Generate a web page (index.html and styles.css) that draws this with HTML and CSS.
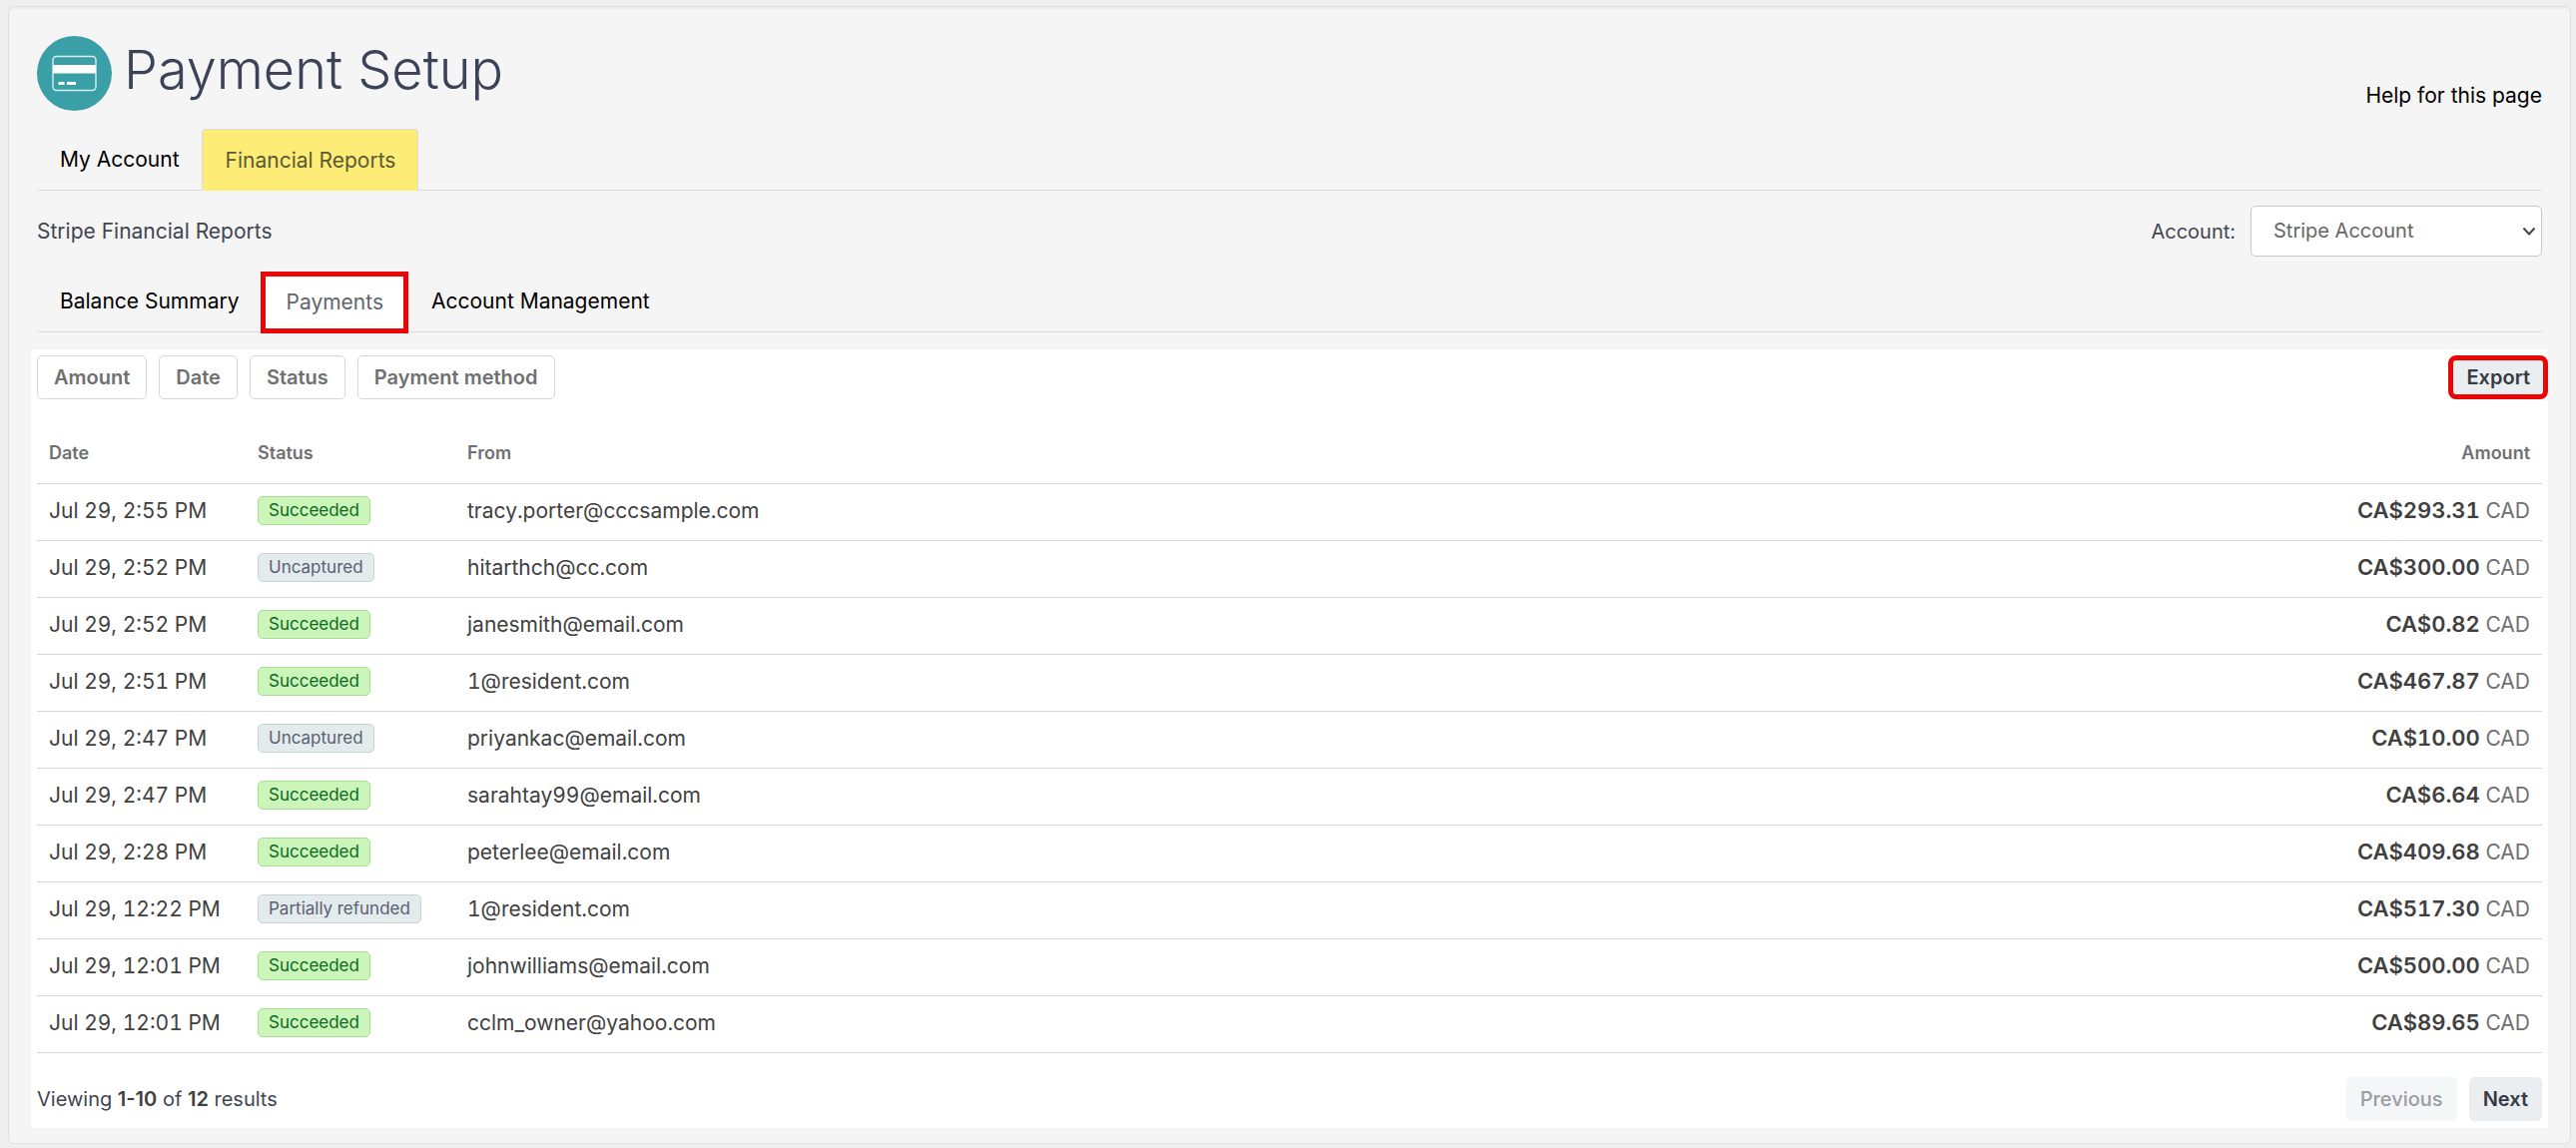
FILE: index.html
```html
<!DOCTYPE html>
<html lang="en">
<head>
    <meta charset="UTF-8">
    <meta name="viewport" content="width=device-width, initial-scale=1.0">
    <title>Payment Setup</title>
    <link rel="stylesheet" href="styles.css">
</head>
<body>
    <main class="panel">
        <header class="page-header">
            <div class="title">
                <svg class="title-icon" viewBox="0 0 75 75" aria-hidden="true">
                    <circle cx="37.5" cy="37.5" r="37.5" fill="#3a9fa6"/>
                    <rect x="16" y="20.5" width="43" height="34" rx="3.5" fill="none" stroke="#d5f0f0" stroke-width="1.4"/>
                    <rect x="16" y="29" width="43" height="8.5" fill="#fff"/>
                    <rect x="21.5" y="46" width="6" height="3" fill="#fff"/>
                    <rect x="30" y="46" width="9" height="3" fill="#fff"/>
                </svg>
                <h1>Payment Setup</h1>
            </div>
            <a class="help" href="#">Help for this page</a>
        </header>

        <nav class="tabs main-tabs">
            <a href="#">My Account</a>
            <a class="current" href="#">Financial Reports</a>
        </nav>

        <div class="report-bar">
            <h2>Stripe Financial Reports</h2>
            <div class="account">
                <label for="account">Account:</label>
                <div class="select-wrap">
                    <select id="account">
                        <option>Stripe Account</option>
                    </select>
                    <svg class="chevron" viewBox="0 0 14 10" aria-hidden="true">
                        <path d="M1.5 1.5 L7 7.5 L12.5 1.5" fill="none" stroke="#444" stroke-width="2"/>
                    </svg>
                </div>
            </div>
        </div>

        <nav class="tabs sub-tabs">
            <a href="#">Balance Summary</a>
            <a class="boxed" href="#">Payments</a>
            <a href="#">Account Management</a>
        </nav>

        <section class="payments">
            <div class="toolbar">
                <div class="filters">
                    <button type="button" class="btn filter">Amount</button>
                    <button type="button" class="btn filter">Date</button>
                    <button type="button" class="btn filter">Status</button>
                    <button type="button" class="btn filter">Payment method</button>
                </div>
                <button type="button" class="btn export">Export</button>
            </div>

            <table>
                <thead>
                    <tr><th class="col-date">Date</th><th class="col-status">Status</th><th>From</th><th class="amount">Amount</th></tr>
                </thead>
                <tbody>
                    <tr><td>Jul 29, 2:55 PM</td><td><span class="badge ok">Succeeded</span></td><td>tracy.porter@cccsample.com</td><td class="amount"><b>CA$293.31</b> CAD</td></tr>
                    <tr><td>Jul 29, 2:52 PM</td><td><span class="badge">Uncaptured</span></td><td>hitarthch@cc.com</td><td class="amount"><b>CA$300.00</b> CAD</td></tr>
                    <tr><td>Jul 29, 2:52 PM</td><td><span class="badge ok">Succeeded</span></td><td>janesmith@email.com</td><td class="amount"><b>CA$0.82</b> CAD</td></tr>
                    <tr><td>Jul 29, 2:51 PM</td><td><span class="badge ok">Succeeded</span></td><td>1@resident.com</td><td class="amount"><b>CA$467.87</b> CAD</td></tr>
                    <tr><td>Jul 29, 2:47 PM</td><td><span class="badge">Uncaptured</span></td><td>priyankac@email.com</td><td class="amount"><b>CA$10.00</b> CAD</td></tr>
                    <tr><td>Jul 29, 2:47 PM</td><td><span class="badge ok">Succeeded</span></td><td>sarahtay99@email.com</td><td class="amount"><b>CA$6.64</b> CAD</td></tr>
                    <tr><td>Jul 29, 2:28 PM</td><td><span class="badge ok">Succeeded</span></td><td>peterlee@email.com</td><td class="amount"><b>CA$409.68</b> CAD</td></tr>
                    <tr><td>Jul 29, 12:22 PM</td><td><span class="badge">Partially refunded</span></td><td>1@resident.com</td><td class="amount"><b>CA$517.30</b> CAD</td></tr>
                    <tr><td>Jul 29, 12:01 PM</td><td><span class="badge ok">Succeeded</span></td><td>johnwilliams@email.com</td><td class="amount"><b>CA$500.00</b> CAD</td></tr>
                    <tr><td>Jul 29, 12:01 PM</td><td><span class="badge ok">Succeeded</span></td><td>cclm_owner@yahoo.com</td><td class="amount"><b>CA$89.65</b> CAD</td></tr>
                </tbody>
            </table>

            <footer class="pager">
                <p>Viewing <b>1-10</b> of <b>12</b> results</p>
                <div class="pager-buttons">
                    <button type="button" class="btn" disabled>Previous</button>
                    <button type="button" class="btn">Next</button>
                </div>
            </footer>
        </section>
    </main>
</body>
</html>
```

FILE: styles.css
```css
* {
    box-sizing: border-box;
}
body {
    margin: 0;
    padding: 6px 5px 4px 8px;
    background-color: #eeeeee;
    color: #414552;
    font-family: Inter, "Liberation Sans", sans-serif;
    font-size: 20px;
    line-height: 24px;
}
h1, h2, p {
    margin: 0;
    font-weight: 400;
}
a {
    color: #000;
    font-size: 21px;
    text-decoration: none;
}
button, select {
    font-family: inherit;
    font-size: 20px;
}
.panel {
    background-color: #f5f5f5;
    border: 1px solid #e0e0e0;
    border-radius: 6px;
    box-shadow: inset 0 2px 2px rgba(0,0,0,0.04);
    padding: 29px 22px 15px;
}
/* Page heading */
.page-header {
    display: flex;
    justify-content: space-between;
    padding: 0 6px;
}
.title {
    display: flex;
    gap: 12px;
}
.title-icon {
    width: 75px;
    height: 75px;
}
h1 {
    color: #3c4257;
    font-size: 54px;
    font-weight: 300;
    line-height: 68px;
}
.help {
    margin-top: 48px;
}
/* Tabs */
.tabs {
    display: flex;
    margin: 0 6px;
    height: 62px;
    border-bottom: 1px solid #dadcde;
}
.tabs a {
    display: flex;
    align-items: center;
    padding: 0 22px 0 23px;
}
.main-tabs {
    margin-top: 18px;
}
.main-tabs .current {
    background-color: #fdec76;
    border: 1px solid #dadcde;
    border-bottom: 0;
    border-radius: 4px 4px 0 0;
    color: #5b5a35;
    margin-bottom: -1px;
}
.sub-tabs {
    margin-top: 15px;
    height: 61px;
}
.tabs .boxed {
    background-color: #fff;
    border: 5px solid #ea0606;
    color: #62656b;
    margin-bottom: -2px;
    padding: 0 20px;
}
/* Report name and account picker */
.report-bar {
    display: flex;
    justify-content: space-between;
    align-items: center;
    margin-top: 15px;
    padding: 0 6px;
}
h2 {
    font-size: 21px;
}
.account {
    display: flex;
    align-items: center;
    gap: 15px;
}
.select-wrap {
    position: relative;
}
select {
    appearance: none;
    width: 292px;
    height: 51px;
    padding: 0 22px 2px;
    border: 1px solid #c8c8c8;
    border-radius: 5px;
    background-color: #fff;
    color: #666;
}
.chevron {
    position: absolute;
    right: 6px;
    top: 21px;
    width: 14px;
    height: 10px;
    pointer-events: none;
}
/* Payments list */
.payments {
    background-color: #fff;
    margin-top: 17px;
    padding: 6px 6px 7px;
}
.toolbar, .pager {
    display: flex;
    justify-content: space-between;
    align-items: center;
}
.filters, .pager-buttons {
    display: flex;
    gap: 12px;
}
.btn {
    height: 44px;
    padding: 0 13px;
    border: 1px solid #ebeef1;
    border-radius: 5px;
    background-color: #ebeef1;
    color: #353a44;
    font-weight: 600;
}
.btn.filter {
    padding: 0 16px;
    background-color: #fff;
    border-color: #d4d6d8;
    color: #6f7072;
}
.btn.export {
    border: 5px solid #ea0606;
    border-radius: 8px;
    margin-right: -6px;
}
.btn:disabled {
    background-color: #f5f6f8;
    border-color: #f5f6f8;
    color: #9a9da1;
    font-weight: 500;
}
table {
    width: 100%;
    margin-top: 24px;
    border-collapse: collapse;
}
th, td {
    height: 57px;
    padding: 0 12px 2px;
    border-bottom: 1px solid #d4d6d8;
    text-align: left;
    white-space: nowrap;
}
th {
    height: 60px;
    padding-bottom: 0;
    color: #6f7072;
    font-size: 18px;
    font-weight: 600;
}
.col-date {
    width: 209px;
}
.col-status {
    width: 210px;
}
td {
    color: #414141;
    font-size: 21px;
    font-variant-numeric: tabular-nums;
}
th.amount, td.amount {
    text-align: right;
}
td.amount {
    color: #707070;
}
b {
    color: #404040;
    font-weight: 600;
}
.amount b {
    font-size: 22px;
}
.badge {
    display: inline-block;
    vertical-align: middle;
    padding: 0 10px;
    border: 1px solid #c8d2d5;
    border-radius: 5px;
    background-color: #e4ebed;
    color: #596171;
    font-size: 17px;
    line-height: 27px;
}
.badge.ok {
    background-color: #cbf5b9;
    border-color: #a8e093;
    color: #0a6b1f;
}
.pager {
    margin-top: 24px;
}
```
